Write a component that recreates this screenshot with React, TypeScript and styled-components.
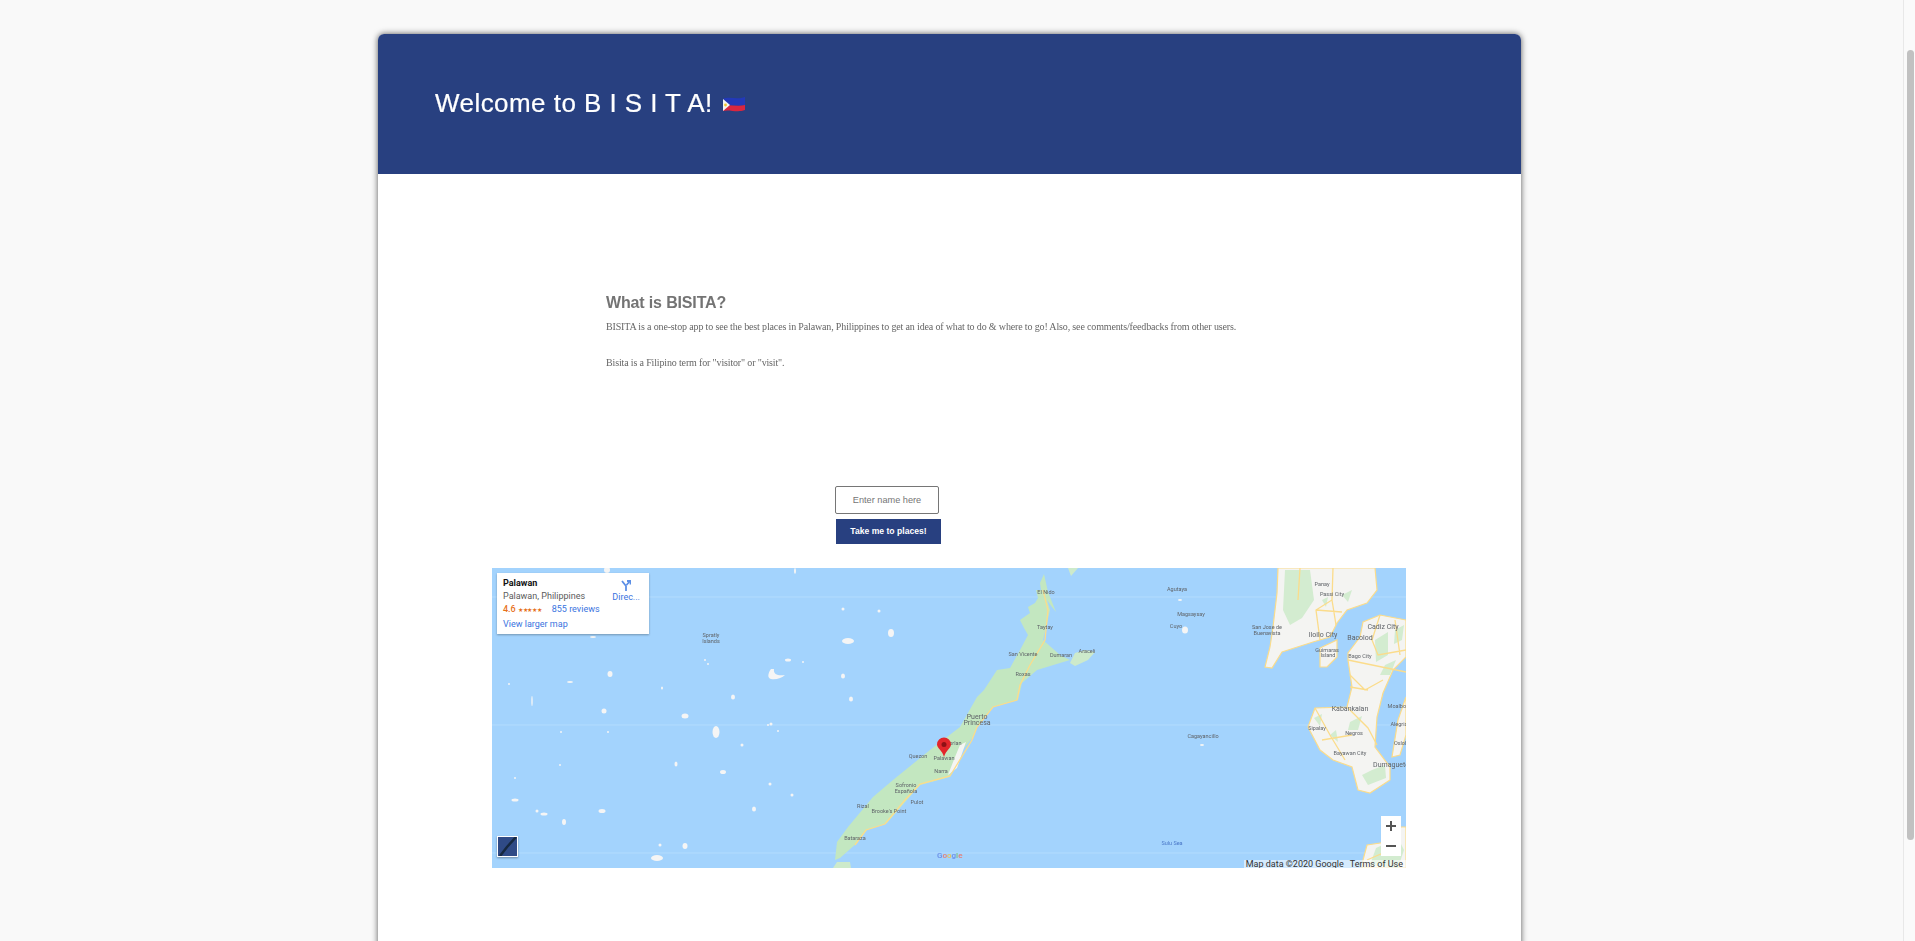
import styled, { createGlobalStyle } from 'styled-components';

const navy = '#284080';
const linkBlue = '#3a73e0';

const GlobalStyle = createGlobalStyle`
	html, body {
		margin: 0;
		height: 100%;
		overflow: hidden;
		background: #f9f9f9;
	}
`;

const Screen = styled.div`
	display: flex;
	height: 941px;
	overflow: hidden;
`;

const Page = styled.main`
	flex: 1;
	min-width: 0;
	padding: 34px 0 0 378px;
`;

const Scrollbar = styled.div`
	width: 12px;
	border-left: 1px solid #e8e8e8;
	background: #fafafa;
	padding: 50px 1px 0 3px;
	box-sizing: border-box;
	flex-shrink: 0;
`;

const ScrollThumb = styled.div`
	height: 790px;
	border-radius: 4px;
	background: #c1c1c1;
`;

const Card = styled.div`
	width: 1143px;
	height: 1000px;
	background: #fff;
	border-radius: 6px 6px 0 0;
	box-shadow: 0 0 6px rgba(0, 0, 0, 0.65);
`;

const Header = styled.header`
	height: 140px;
	display: flex;
	align-items: center;
	gap: 10px;
	padding-left: 57px;
	background: ${navy};
	border-radius: 6px 6px 0 0;
`;

const Title = styled.h1`
	margin: 0 0 2px;
	color: #fff;
	font: 400 26px 'Liberation Sans', Arial, sans-serif;
	letter-spacing: 0.45px;
	-webkit-text-stroke: 0.2px #fff;
	filter: blur(0.3px);
`;

const About = styled.section`
	margin: 120px 0 0 228px;
	color: #666;
`;

const AboutTitle = styled.h2`
	margin: 0 0 9px;
	font: 700 16px/18px 'Liberation Sans', Arial, sans-serif;
	letter-spacing: -0.15px;
	color: #747474;
	filter: blur(0.3px);
`;

const AboutText = styled.p`
	margin: 0 0 24px;
	font: 400 10px/12px 'Liberation Serif', 'Times New Roman', serif;
	letter-spacing: -0.15px;
	color: #666;
	filter: blur(0.25px);
`;

const NameForm = styled.form`
	display: flex;
	flex-direction: column;
	align-items: flex-start;
	gap: 5px;
	margin: 117px 0 0 457px;
`;

const NameInput = styled.input`
	box-sizing: border-box;
	width: 104px;
	height: 28px;
	border: 1px solid #767676;
	border-radius: 2px;
	background: #fff;
	text-align: center;
	font: 400 9.2px 'Liberation Sans', Arial, sans-serif;
	&::placeholder {
		color: #757575;
		opacity: 1;
	}
`;

const GoButton = styled.button`
	width: 105px;
	height: 25px;
	margin-left: 1px;
	border: 0;
	padding: 0 0 2px;
	background: ${navy};
	color: #fff;
	font: 700 8.6px 'Liberation Sans', Arial, sans-serif;
`;

const MapFrame = styled.div`
	position: relative;
	width: 914px;
	height: 300px;
	margin: 24px 0 0 114px;
	overflow: hidden;
	background: #a3d3fd;
	font-family: Roboto, Arial, sans-serif;
`;

const MapArt = styled.svg`
	display: block;
	filter: blur(0.5px);
`;

const InfoCard = styled.div`
	position: absolute;
	top: 5px;
	left: 5px;
	width: 152px;
	height: 61px;
	display: flex;
	justify-content: space-between;
	box-sizing: border-box;
	padding: 4px 9px 0 6px;
	background: #fff;
	box-shadow: 0 1px 2px rgba(0, 0, 0, 0.3);
	font-size: 9px;
	line-height: 13px;
	color: #5b5b5b;
`;

const PlaceName = styled.div`
	font-weight: 700;
	color: #111;
`;

const RatingRow = styled.div`
	display: flex;
	align-items: center;
	gap: 2px;
`;

const Score = styled.span`
	color: #e7711b;
	font-weight: 500;
`;

const Stars = styled.span`
	color: #e7711b;
	font-size: 6px;
	letter-spacing: -0.2px;
	margin-right: 8px;
`;

const MapLink = styled.a`
	color: ${linkBlue};
`;

const LargerLink = styled(MapLink)`
	display: block;
	margin-top: 2px;
`;

const Directions = styled.div`
	display: flex;
	flex-direction: column;
	align-items: center;
	gap: 0;
	margin-top: 3px;
	color: ${linkBlue};
`;

const ZoomBox = styled.div`
	position: absolute;
	right: 5px;
	bottom: 12px;
	width: 20px;
	height: 40px;
	display: flex;
	flex-direction: column;
	background: #fff;
`;

const ZoomKey = styled.div`
	height: 20px;
	display: flex;
	align-items: center;
	justify-content: center;
	color: #555;
`;

const Attribution = styled.div`
	position: absolute;
	right: 0;
	bottom: -1px;
	height: 9px;
	padding: 0 3px 0 2px;
	display: flex;
	gap: 6px;
	background: rgba(255, 255, 255, 0.55);
	color: #333;
	font-size: 9px;
	line-height: 9px;
`;

const LayerThumb = styled.div`
	position: absolute;
	left: 5px;
	bottom: 11px;
	width: 21px;
	height: 21px;
	box-sizing: border-box;
	border: 1px solid #fff;
	box-shadow: 0 1px 2px rgba(0, 0, 0, 0.35);
	background: #2f4a86;
	overflow: hidden;
`;

// map art, in page coordinates so it reads against the screenshot
const palawan =
	'M1044 574L1040 583 1041 590 1036 590 1038 598 1035 603 1028 607 1030 613 1020 620 1024 628 1028 635 1020 650 1010 668 997 670 984 690 977 697 960 727 930 750 893 780 873 797 848 827 837 842 835 860 840 858 857 843 867 830 887 823 907 800 920 785 950 777 957 757 973 737 977 727 993 707 1018 700 1022 683 1037 670 1060 663 1070 660 1060 655 1043 640 1050 610 1047 600 1052 607 1056 612 1048 592Z';

const streets = [
	'M1278 568L1277 593 1273 627 1270 647 1265 667 1272 668 1282 652 1313 642 1330 637 1337 623 1347 610 1367 603 1377 590 1375 568Z',
	'M1380 615L1406 620 1406 657 1393 670 1383 693 1377 717 1375 747 1390 767 1390 780 1370 793 1358 790 1352 767 1333 760 1320 750 1308 727 1315 708 1347 707 1352 687 1348 660 1348 653 1360 637 1363 622Z',
	'M1320 648L1337 640 1337 657 1327 667 1320 667Z',
	'M1406 697L1398 720 1392 757 1400 755 1406 735Z',
	'M1362 868L1363 860 1367 845 1387 842 1401 827 1406 827 1406 868Z',
];

const pale = [
	'M1068 568L1071 576 1078 568Z',
	'M1070 663L1075 653 1085 650 1095 652 1088 660 1075 666Z',
	'M833 868L837 862 850 862 851 868Z',
];

const greens = [
	'M1285 570L1310 570 1314 600 1302 618 1290 625 1283 610Z',
	'M1322 600L1328 597 1326 607Z',
	'M1342 595L1352 590 1348 602Z',
	'M1375 640L1388 632 1388 655 1376 662Z',
	'M1385 665L1396 660 1390 675 1380 675Z',
	'M1372 770L1385 765 1386 778 1368 785 1362 775Z',
	'M1350 722L1362 716 1358 730 1348 730Z',
	'M1314 718L1322 714 1320 726Z',
	'M1330 735L1336 730 1338 742Z',
	'M1395 630L1404 625 1402 640 1394 644Z',
	'M1370 865L1376 848 1398 838 1404 850 1398 868Z',
];

const roads = [
	'M1043 590L1048 610 1045 640 1030 665 1020 685 1017 700 993 707 977 727 972 740 950 776 920 784 905 800 885 824 866 830 855 845',
	'M1333 568L1332 600 1316 610 1320 640M1332 600L1336 625M1316 610L1342 612M1300 568L1298 600',
	'M1380 615L1372 640 1378 655 1406 650M1348 660L1406 672M1350 675L1365 690 1383 680M1350 687L1368 690M1395 620L1400 655',
	'M1315 708L1330 735 1345 760M1347 707L1368 728 1377 745M1322 740L1352 735',
	'M1367 860L1390 850',
];

const isles: [number, number, number, number][] = [
	[610, 674, 2.5, 3], [570, 682, 3, 1], [532, 701, 0.7, 5], [604, 711, 2.5, 2.5], [685, 716, 3.5, 2.5], [716, 732, 3.5, 6],
	[733, 697, 2, 2.5], [788, 660, 3, 1.5], [803, 662, 1, 1], [843, 676, 2, 2.5], [851, 699, 2, 2.5], [742, 745, 1.5, 1.5],
	[723, 772, 3, 2], [770, 784, 1.5, 1.5], [792, 795, 1.5, 1.5], [754, 809, 2, 2.5], [676, 764, 1.5, 2.5], [602, 811, 3.5, 2],
	[515, 800, 3.5, 1.5], [544, 814, 3.5, 1.5], [564, 822, 2, 3], [537, 811, 1.5, 1.5], [657, 858, 6, 3], [685, 846, 2.5, 3],
	[660, 845, 1.5, 1.5], [848, 641, 6, 3], [891, 633, 3, 4], [843, 609, 1.5, 1.5], [879, 611, 1.5, 1.5], [607, 570, 3, 3],
	[795, 571, 1, 3], [593, 637, 3, 1], [509, 684, 1, 1], [608, 732, 1, 1], [561, 732, 1, 1], [560, 765, 1, 1], [515, 778, 1, 1],
	[768, 725, 1, 1], [771, 724, 1.5, 1.5], [778, 731, 1, 1], [662, 688, 1, 1.5], [705, 660, 1, 1], [708, 664, 1, 1],
	[1180, 600, 2, 1], [1185, 630, 3, 3.5], [1202, 745, 2, 1],
];

const labels: [string, number, number, number?][] = [
	['Spratly', 711, 637], ['Islands', 711, 643], ['El Nido', 1046, 594], ['Taytay', 1045, 629], ['San Vicente', 1023, 656],
	['Dumaran', 1061, 657], ['Araceli', 1087, 653], ['Roxas', 1023, 676], ['Puerto', 977, 719, 7], ['Princesa', 977, 725, 7],
	['Agutaya', 1177, 591], ['Magsaysay', 1191, 616], ['Cuyo', 1176, 628], ['Cagayancillo', 1203, 738],
	['San Jose de', 1267, 629], ['Buenavista', 1267, 635], ['Panay', 1322, 586], ['Passi City', 1332, 596],
	['Iloilo City', 1323, 637, 7], ['Cadiz City', 1383, 629, 7], ['Bacolod', 1360, 640, 7], ['Guimaras', 1327, 652], ['Island', 1328, 657],
	['Bago City', 1360, 658], ['Kabankalan', 1350, 711, 7], ['Sipalay', 1317, 730], ['Negros', 1354, 735], ['Bayawan City', 1350, 755],
	['Dumaguete', 1391, 767, 7], ['Moalboal', 1399, 708], ['Alegria', 1399, 726], ['Oslob', 1401, 745], ['Aborlan', 952, 745],
	['Quezon', 918, 758], ['Palawan', 944, 760], ['Narra', 941, 773], ['Sofronio', 906, 787], ['Española', 906, 793], ['Rizal', 863, 808],
	["Brooke's Point", 889, 813], ['Pulot', 917, 804], ['Bataraza', 855, 840],
];

function PalawanMap() {
	return (
		<MapArt width="914" height="300" viewBox="492 568 914 300" fontFamily="Roboto, Arial, sans-serif">
			<path d="M492 597H1406M492 725H1406M492 853H1406" stroke="#b3dcfe" strokeWidth="1" />
			{isles.map(([cx, cy, rx, ry]) => (
				<ellipse key={`${cx}-${cy}`} cx={cx} cy={cy} rx={rx} ry={ry} fill="#f5f5f5" />
			))}
			<path d="M771 669C768 673 767 678 771 679 776 680 782 678 785 675 779 676 773 675 774 669Z" fill="#f5f5f5" />
			{streets.map(d => (
				<path key={d} d={d} fill="#f4f4f2" stroke="#fbdc8b" strokeWidth="1.2" />
			))}
			<path d={palawan} fill="#c3e7c0" />
			<path d="M955 757L960 745 966 742 957 768 948 775Z" fill="#f5f5f3" />
			{pale.map(d => (
				<path key={d} d={d} fill="#cdeacb" />
			))}
			{greens.map(d => (
				<path key={d} d={d} fill="#d3ecd0" />
			))}
			{roads.map(d => (
				<path key={d} d={d} fill="none" stroke="#fbdc8b" strokeWidth="1.3" />
			))}
			{labels.map(([text, x, y, size]) => (
				<text key={text} x={x} y={y} textAnchor="middle" fontSize={size ?? 5.5} fill="#5f6368">
					{text}
				</text>
			))}
			<text x="1172" y="845" textAnchor="middle" fontSize="5.5" fill="#4a78c8">
				Sulu Sea
			</text>
			<path d="M944 757C942 750 937 748 937 744.500A6.500 6.500 0 0 1 951 744.500C951 748 946 750 944 757Z" fill="#e2262b" />
			<circle cx="944" cy="744.500" r="2.500" fill="#8e1116" />
			<text x="937" y="858" fontSize="8" fontWeight="500">
				<tspan fill="#6b8fe8">G</tspan>
				<tspan fill="#e77a72">o</tspan>
				<tspan fill="#edc04f">o</tspan>
				<tspan fill="#6b8fe8">g</tspan>
				<tspan fill="#7cc184">l</tspan>
				<tspan fill="#e77a72">e</tspan>
			</text>
		</MapArt>
	);
}

export default function App() {
	return (
		<>
			<GlobalStyle />
			<Screen>
				<Page>
					<Card>
						<Header>
							<Title>Welcome to B I S I T A!</Title>
							<svg width="22" height="17" viewBox="0 0 22 17">
								<path d="M0 3C6 0 14 4 22 1V9C14 11 6 8 0 10Z" fill="#2339b8" />
								<path d="M0 10C6 8 14 11 22 9V14C14 17 6 13 0 15Z" fill="#d9263f" />
								<path d="M0 3L7 9 0 15Z" fill="#f4f4f0" />
								<circle cx="2.500" cy="9" r="1.400" fill="#f2c530" />
							</svg>
						</Header>
						<About>
							<AboutTitle>What is BISITA?</AboutTitle>
							<AboutText>
								BISITA is a one-stop app to see the best places in Palawan, Philippines to get an idea of what to do &amp; where to go! Also, see comments/feedbacks from other users.
							</AboutText>
							<AboutText>Bisita is a Filipino term for "visitor" or "visit".</AboutText>
						</About>
						<NameForm>
							<NameInput placeholder="Enter name here" />
							<GoButton type="button">Take me to places!</GoButton>
						</NameForm>
						<MapFrame>
							<PalawanMap />
							<InfoCard>
								<div>
									<PlaceName>Palawan</PlaceName>
									<div>Palawan, Philippines</div>
									<RatingRow>
										<Score>4.6</Score>
										<Stars>★★★★★</Stars>
										<MapLink>855 reviews</MapLink>
									</RatingRow>
									<LargerLink>View larger map</LargerLink>
								</div>
								<Directions>
									<svg width="10" height="11" viewBox="0 0 10 11" fill="none" stroke="#5c8fe6" strokeWidth="1.8">
										<path d="M1 1L5 6V11M9 1L5.500 5" />
										<path d="M6 1H9.500V4.500" />
									</svg>
									<span>Direc...</span>
								</Directions>
							</InfoCard>
							<ZoomBox>
								<ZoomKey>
									<svg width="10" height="10" viewBox="0 0 10 10">
										<path d="M5 0V10M0 5H10" stroke="#555" strokeWidth="2" />
									</svg>
								</ZoomKey>
								<ZoomKey>
									<svg width="10" height="10" viewBox="0 0 10 10">
										<path d="M0 5H10" stroke="#555" strokeWidth="2" />
									</svg>
								</ZoomKey>
							</ZoomBox>
							<LayerThumb>
								<svg width="19" height="19" viewBox="0 0 19 19">
									<path d="M2 19L9 10 18 0" stroke="#16283f" strokeWidth="2.500" fill="none" />
								</svg>
							</LayerThumb>
							<Attribution>
								<span>Map data ©2020 Google</span>
								<span>Terms of Use</span>
							</Attribution>
						</MapFrame>
					</Card>
				</Page>
				<Scrollbar>
					<ScrollThumb />
				</Scrollbar>
			</Screen>
		</>
	);
}
